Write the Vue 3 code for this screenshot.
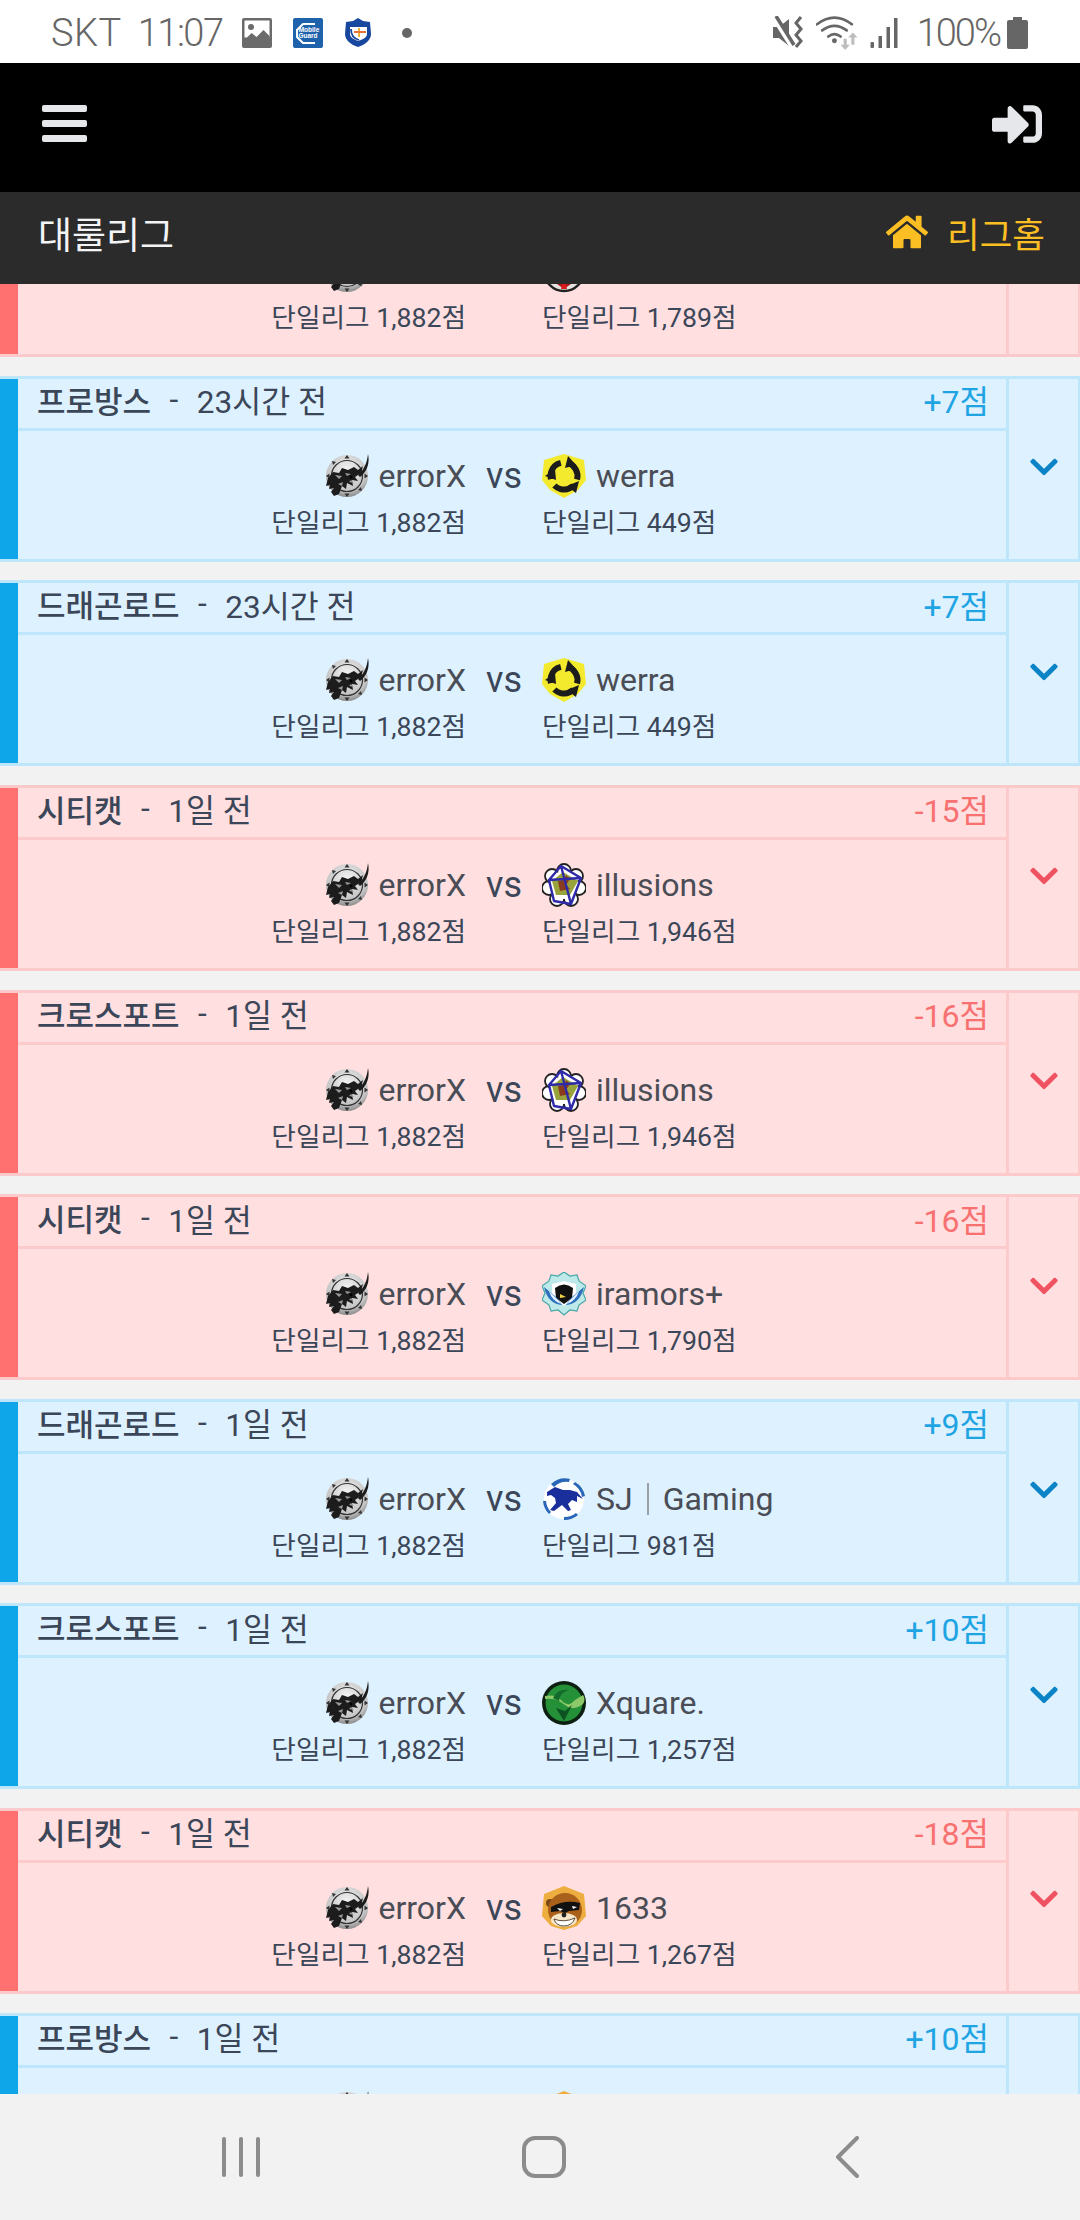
<script setup>
const B = 'blue'
const R = 'red'
const matches = [
  { tone: R, map: '', time: '', score: '', logo: 'hawk', opp: '', oppPts: '1,789' },
  { tone: B, map: '프로방스', time: '23시간 전', score: '+7점', logo: 'werra', opp: 'werra', oppPts: '449' },
  { tone: B, map: '드래곤로드', time: '23시간 전', score: '+7점', logo: 'werra', opp: 'werra', oppPts: '449' },
  { tone: R, map: '시티캣', time: '1일 전', score: '-15점', logo: 'illusions', opp: 'illusions', oppPts: '1,946' },
  { tone: R, map: '크로스포트', time: '1일 전', score: '-16점', logo: 'illusions', opp: 'illusions', oppPts: '1,946' },
  { tone: R, map: '시티캣', time: '1일 전', score: '-16점', logo: 'iramors', opp: 'iramors+', oppPts: '1,790' },
  { tone: B, map: '드래곤로드', time: '1일 전', score: '+9점', logo: 'sj', opp: 'SJ', oppExtra: 'Gaming', oppPts: '981' },
  { tone: B, map: '크로스포트', time: '1일 전', score: '+10점', logo: 'xquare', opp: 'Xquare.', oppPts: '1,257' },
  { tone: R, map: '시티캣', time: '1일 전', score: '-18점', logo: 'bear', opp: '1633', oppPts: '1,267' },
  { tone: B, map: '프로방스', time: '1일 전', score: '+10점', logo: 'bear', opp: '1633', oppPts: '1,267' }
]
</script>

<template>
  <div class="phone">
    <svg class="defs" width="0" height="0" aria-hidden="true">
      <defs>
        <radialGradient id="steel" cx="50%" cy="35%" r="70%">
          <stop offset="0" stop-color="#f4f4f4" />
          <stop offset="0.7" stop-color="#c4c4c4" />
          <stop offset="1" stop-color="#7a7a7a" />
        </radialGradient>
        <symbol id="logo-errorx" viewBox="0 0 44 44">
          <circle cx="22" cy="22" r="21" fill="url(#steel)" />
          <circle cx="22" cy="22" r="15.500" fill="none" stroke="#333" stroke-width="1.200" />
          <path d="M3 24l5-6 6 1 3-5 6 2 6-3 4 3 5-4-2 7-6 4 3 4-6-1 1 6-6-3-1 6-4-3-3 8-5 2-3-4 3-4-5 1 1-4-4 1z" fill="#1c1c1c" />
          <path d="M43 0c2 9-1 18-8 23l-2-2c6-5 9-12 10-21z" fill="#1c1c1c" />
          <path d="M10 21l7 1-3 3zM20 19l6 1-4 2zM13 30l5-2-1 4zM26 26l3 3-5-1z" fill="#9a9a9a" />
          <circle cx="26" cy="23" r="1.400" fill="#000" />
          <path d="M22 1l2.500 3.500h-5zM22 43l2.500-3.500h-5zM1 22l3.500-2.500v5zM43 22l-3.500-2.500v5zM7 7l4 1-3 3zM37 37l-4-1 3-3z" fill="#333" />
        </symbol>
        <symbol id="logo-werra" viewBox="0 0 44 44">
          <path d="M22 0l20 6 2 20-8 10-14 8-14-8-8-10 2-20z" fill="#f3ea2e" />
          <circle cx="22" cy="22" r="13.500" fill="none" stroke="#1c1c1c" stroke-width="6" stroke-dasharray="21 7.270" transform="rotate(-75 22 22)" />
          <path d="M26 2l8 9-11 3zM37 27l-3 12-9-7zM3 22l10-7 1 11z" fill="#1c1c1c" />
        </symbol>
        <symbol id="logo-illusions" viewBox="0 0 44 44">
          <g fill="#fff" stroke="#222" stroke-width="1.800">
            <circle cx="22" cy="8" r="7" /><circle cx="34" cy="13" r="7" /><circle cx="37" cy="25" r="7" />
            <circle cx="29" cy="36" r="7" /><circle cx="15" cy="36" r="7" /><circle cx="7" cy="25" r="7" /><circle cx="10" cy="13" r="7" />
          </g>
          <circle cx="22" cy="22" r="14" fill="#fff" />
          <path d="M21 9l15 9-8 14-14 0-4-14z" fill="#98a33c" />
          <path d="M16 18l12-2-4 6 4 4-10 2zM24 12l5 5-7 1z" fill="#8a3b1e" />
          <path d="M19 3l20 12-10 26-17-3-5-21zM19 3l10 38M7 17l32-2" fill="none" stroke="#2f2ba8" stroke-width="2.400" stroke-linejoin="round" />
        </symbol>
        <symbol id="logo-iramors" viewBox="0 0 44 44">
          <path d="M22 0l6 4 7-1 2 6 7 5-3 7 3 7-7 5-2 6-7-1-6 5-6-5-7 1-2-6-7-5 3-7-3-7 7-5 2-6 7 1z" fill="#bde9e8" stroke="#46a7a8" stroke-width="1.200" />
          <path d="M10 12l12-3 12 3v10l-12 12-12-12z" fill="#fff" />
          <path d="M13 16q9-7 18 0l-1 10-8 6-8-6z" fill="#111" />
          <path d="M18 22l6 3-6 1z" fill="#f0d246" />
          <path d="M2 15l12 10 6 8q-14-1-18-18zM42 15L30 25l-6 8q14-1 18-18z" fill="#2f6fc0" />
          <path d="M7 19l9 9 3 4q-9-3-12-13zM37 19l-9 9-3 4q9-3 12-13z" fill="#dff2fb" />
        </symbol>
        <symbol id="logo-sj" viewBox="0 0 44 44">
          <circle cx="22" cy="22" r="20" fill="#fff" />
          <path d="M9 7A21 21 0 0 1 28 2l-1 3A18 18 0 0 0 12 10zM33 5a21 21 0 0 1 10 14l-3 1a18 18 0 0 0-9-13zM1 24a21 21 0 0 0 6 13l2-2a18 18 0 0 1-5-11zM22 43a21 21 0 0 0 14-5l-2-2a18 18 0 0 1-12 4z" fill="#2a66b8" />
          <path d="M5 15l8-5 8 3 7 0 7 2 6 7-6-3 0 6-5-2-4 4 3 6-3 1-6-6-8 6-4-1 6-7-1-5-4-3-4 1z" fill="#1a2f9c" />
        </symbol>
        <symbol id="logo-xquare" viewBox="0 0 44 44">
          <circle cx="22" cy="22" r="22" fill="#0c1f10" />
          <circle cx="22" cy="22" r="18.500" fill="#249138" />
          <path d="M3 15q11-2 17 5t13-1l8-5q3 4 0 9-7 6-15 3l-9-6q-5-3-14-2z" fill="#8dc968" />
          <path d="M14 27l8 13 8-16-7 6z" fill="#0d5322" />
          <path d="M27 9q-9 2-10 11l-6-3q5-10 16-8z" fill="#126a2b" />
        </symbol>
        <symbol id="logo-bear" viewBox="0 0 44 44">
          <path d="M22 0l20 8 2 22-9 10-13 4-13-4-9-10 2-22z" fill="#eeae3f" />
          <circle cx="8" cy="17" r="4" fill="#7d4715" />
          <ellipse cx="23" cy="24" rx="17" ry="17" fill="#a9601a" />
          <path d="M9 21q14-8 29-4l-1 7-10 1-4 2-5-2-9 1z" fill="#111" />
          <path d="M15 22l6 1-3 2zM30 20l5 1-4 2z" fill="#fff" />
          <ellipse cx="22" cy="34" rx="13" ry="7" fill="#f5e6c8" />
          <path d="M12 33q10 4 21-1-3 8-11 8t-10-7z" fill="#fff" stroke="#3a2410" stroke-width=".8" />
          <circle cx="22" cy="29" r="2.400" fill="#222" />
        </symbol>
        <symbol id="logo-hawk" viewBox="0 0 44 44">
          <circle cx="22" cy="22" r="20" fill="#e8e3e3" stroke="#222" stroke-width="2.400" />
          <path d="M8 30q14 8 28 0l-14 10z" fill="#b01818" />
          <path d="M22 28l-3 12h6z" fill="#d81c1c" />
        </symbol>
      </defs>
    </svg>

    <header class="status">
      <div class="status-left">
        <span class="carrier">SKT</span>
        <span class="clock">11:07</span>
        <svg class="ic-image" viewBox="0 0 30 30">
          <rect width="30" height="30" rx="2" fill="#6b6b6b" />
          <rect x="2.500" y="2.500" width="25" height="17" fill="#fff" />
          <circle cx="9" cy="9" r="3" fill="#6b6b6b" />
          <path d="M2.500 22l7-7 5 4 7-7 6 6v9h-25z" fill="#6b6b6b" />
        </svg>
        <svg class="ic-guard" viewBox="0 0 30 30">
          <rect width="30" height="30" rx="2" fill="#1f62ac" />
          <path d="M22 6h-12l-6 6v7l6 6h12" fill="none" stroke="#fff" stroke-width="2" />
          <text x="16" y="13.500" class="guard-text" text-anchor="middle">Mobile</text>
          <text x="15" y="19.500" class="guard-text" text-anchor="middle">Guard</text>
        </svg>
        <svg class="ic-shield" viewBox="0 0 26 29">
          <path d="M13 0l5 3 7 1 1 12c0 6-6 11-13 13C6 27 0 22 0 16L1 4l7-1z" fill="#17479e" />
          <path d="M5 9h17v7c0 3-3 5-9 7-5-2-8-4-8-7z" fill="#fff" />
          <path d="M13 10h2v9h-2z" fill="#f4b32c" />
          <path d="M9 13h12v2H9z" fill="#e6743a" />
          <path d="M6 11q0 9 8 11" fill="none" stroke="#17479e" stroke-width="1.800" />
        </svg>
        <i class="dot"></i>
      </div>
      <div class="status-right">
        <svg class="ic-mute" viewBox="0 0 31 33">
          <path d="M0 11h6l10-8v27l-10-8H0z" fill="#666" />
          <path d="M0 1l18 29" stroke="#fff" stroke-width="4" />
          <path d="M3 0l18 29" stroke="#666" stroke-width="3.500" />
          <path d="M28 1l-5 6 5 6-5 6 5 6-5 6" fill="none" stroke="#666" stroke-width="3" />
        </svg>
        <svg class="ic-wifi" viewBox="0 0 41 35">
          <g fill="none" stroke="#666" stroke-width="2.600" stroke-linecap="round">
            <path d="M1 9q17-13 34 0" />
            <path d="M6 15q12-9 24 0" />
            <path d="M12 21q6-5 12 0" />
          </g>
          <circle cx="18" cy="25" r="2.400" fill="#666" />
          <path d="M27 23h3v6h3l-4.500 5-4.500-5h3zM36 17l4.500 5h-3v7h-3v-7h-3z" fill="#bdbdbd" />
        </svg>
        <svg class="ic-signal" viewBox="0 0 27 30">
          <rect x="0" y="24" width="3.500" height="6" rx="1" fill="#666" />
          <rect x="8" y="18" width="3.500" height="12" fill="#666" />
          <rect x="16" y="9" width="3.500" height="21" fill="#666" />
          <rect x="23.500" y="0" width="3.500" height="30" fill="#666" />
        </svg>
        <span class="percent">100%</span>
        <svg class="ic-battery" viewBox="0 0 21 32">
          <path d="M6 0h9v3h4a2 2 0 0 1 2 2v25a2 2 0 0 1-2 2H2a2 2 0 0 1-2-2V5a2 2 0 0 1 2-2h4z" fill="#666" />
        </svg>
      </div>
    </header>

    <nav class="topbar">
      <div class="burger"><i></i><i></i><i></i></div>
      <svg class="ic-login" viewBox="0 0 512 512">
        <path fill="#e5e7eb" d="M416 448h-84c-6.600 0-12-5.400-12-12v-40c0-6.600 5.400-12 12-12h84c17.700 0 32-14.300 32-32V160c0-17.700-14.300-32-32-32h-84c-6.600 0-12-5.400-12-12V76c0-6.600 5.400-12 12-12h84c53 0 96 43 96 96v192c0 53-43 96-96 96zm-47-201L201 79c-15-15-41-4.500-41 17v96H24c-13.300 0-24 10.700-24 24v96c0 13.300 10.700 24 24 24h136v96c0 21.500 26 32 41 17l168-168c9.300-9.400 9.300-24.600 0-34z" />
      </svg>
    </nav>

    <div class="subbar">
      <span class="league">대룰리그</span>
      <span class="home">
        <svg class="ic-home" viewBox="0 0 576 512">
          <path fill="#fbbf24" d="M280.370 148.260L96 300.110V464a16 16 0 0 0 16 16l112.060-.29a16 16 0 0 0 15.920-16V368a16 16 0 0 1 16-16h64a16 16 0 0 1 16 16v95.640a16 16 0 0 0 16 16.050L464 480a16 16 0 0 0 16-16V300L295.670 148.260a12.190 12.190 0 0 0-15.300 0zM571.600 251.470L488 182.560V44.050a12 12 0 0 0-12-12h-56a12 12 0 0 0-12 12v72.610L318.470 43a48 48 0 0 0-61 0L4.340 251.470a12 12 0 0 0-1.600 16.900l25.500 31A12 12 0 0 0 45.150 301l235.220-193.740a12.190 12.190 0 0 1 15.300 0L530.900 301a12 12 0 0 0 16.900-1.600l25.500-31a12 12 0 0 0-1.700-16.930z" />
        </svg>
        리그홈
      </span>
    </div>

    <main class="viewport">
      <div class="list">
        <article v-for="(m, i) in matches" :key="i" class="card" :class="m.tone">
          <div class="bar"></div>
          <div class="main">
            <div class="head">
              <span class="map">{{ m.map }}</span>
              <span v-if="m.map" class="sep">-</span>
              <span class="time">{{ m.time }}</span>
              <span class="score">{{ m.score }}</span>
            </div>
            <div class="body">
              <div class="me">
                <svg class="logo"><use href="#logo-errorx" /></svg>
                <span class="name">errorX</span>
              </div>
              <span class="vs">vs</span>
              <div class="opp">
                <svg class="logo"><use :href="'#logo-' + m.logo" /></svg>
                <span class="name">{{ m.opp }}</span>
                <template v-if="m.oppExtra">
                  <i class="pipe"></i>
                  <span class="name">{{ m.oppExtra }}</span>
                </template>
              </div>
              <div class="pts me-pts">단일리그 1,882점</div>
              <div class="pts opp-pts">단일리그 {{ m.oppPts }}점</div>
            </div>
          </div>
          <div class="toggle">
            <svg v-if="i < 9" class="chev" viewBox="0 0 448 512">
              <path fill="currentColor" d="M207.029 381.476L12.686 187.132c-9.373-9.373-9.373-24.569 0-33.941l22.667-22.667c9.357-9.357 24.522-9.375 33.901-.04L224 284.505l154.745-154.021c9.379-9.335 24.544-9.317 33.901.04l22.667 22.667c9.373 9.373 9.373 24.569 0 33.941L240.971 381.476c-9.373 9.372-24.569 9.372-33.942 0z" />
            </svg>
          </div>
        </article>
      </div>
    </main>

    <footer class="navbar">
      <div class="recents"><i></i><i></i><i></i></div>
      <div class="homebtn"></div>
      <svg class="back" viewBox="0 0 25 42">
        <path d="M22 2L3 21l19 19" fill="none" stroke="#8c8c8c" stroke-width="4" stroke-linecap="round" stroke-linejoin="round" />
      </svg>
    </footer>
  </div>
</template>

<style>
html, body { margin: 0; background: #f2f2f2; }
</style>

<style scoped>
.phone {
  width: 1080px;
  height: 2220px;
  display: flex;
  flex-direction: column;
  overflow: hidden;
  background: #f2f2f2;
  font-family: Roboto, "Noto Sans CJK KR", sans-serif;
}
.defs { position: absolute; }
svg { display: block; flex: none; }

.status {
  height: 63px;
  flex: none;
  box-sizing: border-box;
  background: #fff;
  display: flex;
  justify-content: space-between;
  align-items: center;
  padding: 2px 52px 0 51px;
  color: #666;
  font-size: 38px;
  font-weight: 300;
}
.status-left, .status-right { display: flex; align-items: center; }
.carrier { margin-right: 16px; letter-spacing: .5px; }
.clock { margin-right: 19px; letter-spacing: -1.500px; }
.ic-image { width: 30px; height: 30px; margin-right: 21px; }
.ic-guard { width: 30px; height: 30px; margin-right: 22px; }
.guard-text { font-size: 6.500px; font-weight: 700; fill: #fff; font-family: "Liberation Sans", sans-serif; }
.ic-shield { width: 26px; height: 29px; margin-right: 31px; }
.dot { width: 10px; height: 10px; border-radius: 50%; background: #666; }
.ic-mute { width: 33px; height: 33px; margin-right: 11px; }
.ic-wifi { width: 42px; height: 36px; margin-right: 12px; }
.ic-signal { width: 28px; height: 30px; margin-right: 19px; }
.percent { margin-right: 7px; letter-spacing: -2px; }
.ic-battery { width: 21px; height: 32px; }

.topbar {
  height: 129px;
  flex: none;
  box-sizing: border-box;
  background: #000;
  display: flex;
  justify-content: space-between;
  align-items: center;
  padding: 0 38px 8px 42px;
}
.burger { display: flex; flex-direction: column; gap: 8px; }
.burger i { display: block; width: 45px; height: 7px; border-radius: 2px; background: #e5e7eb; }
.ic-login { width: 50px; height: 50px; }

.subbar {
  height: 92px;
  flex: none;
  box-sizing: border-box;
  background: #2b2b2b;
  display: flex;
  justify-content: space-between;
  align-items: center;
  padding: 0 35px 11px 38px;
}
.league { color: #f3f4f6; font-size: 37px; font-weight: 400; }
.home { display: flex; align-items: center; gap: 19px; color: #fbbf24; font-size: 35.500px; font-weight: 400; }
.ic-home { width: 42px; height: 38px; margin-top: -1px; }

.viewport { flex: 1; min-height: 0; overflow: hidden; }
.list { margin-top: -112.800px; display: flex; flex-direction: column; gap: 18.600px; }

.card {
  height: 186px;
  flex: none;
  box-sizing: border-box;
  display: grid;
  grid-template-columns: 18px 1fr 72px;
  border-style: solid;
  border-width: 3px 2px 3px 0;
  color: #3b4658;
}
.card.blue { background: #def1ff; border-color: #bde6fb; }
.card.red { background: #ffdfdf; border-color: #fccaca; }
.blue .bar { background: #0ea5e9; }
.red .bar { background: #ff7070; }

.main { display: flex; flex-direction: column; min-width: 0; }
.head {
  height: 52px;
  flex: none;
  box-sizing: border-box;
  display: flex;
  align-items: center;
  padding: 0 17px 8px 19px;
  border-bottom: 3px solid;
  font-size: 31.500px;
}
.blue .head { border-color: #bde6fb; }
.red .head { border-color: #fccaca; }
.map { font-weight: 500; font-size: 31px; }
.sep { margin: 0 18.500px; }
.score { margin-left: auto; font-size: 32px; }
.blue .score { color: #1fa4e3; }
.red .score { color: #f87171; }

.body {
  flex: 1;
  display: grid;
  grid-template-columns: 448px 76px 1fr;
  grid-template-rows: 44px 30px;
  row-gap: 10px;
  padding-top: 23px;
  align-items: center;
}
.me, .opp { display: flex; align-items: center; gap: 10px; color: #4a4d55; font-size: 32px; }
.me { justify-content: flex-end; }
.logo { width: 44px; height: 44px; }
.vs { text-align: center; font-size: 36px; color: #3b4658; line-height: 44px; }
.pts { font-size: 26.700px; line-height: 30px; white-space: nowrap; color: #3b4658; }
.me-pts { grid-column: 1; text-align: right; }
.opp-pts { grid-column: 3; }
.pipe { width: 2px; height: 32px; background: #9aa0a6; margin: 0 4px; }

.toggle {
  border-left: 3px solid;
  display: flex;
  justify-content: center;
  align-items: center;
  padding: 0 0 3px 0;
}
.blue .toggle { border-color: #bde6fb; color: #0a84c6; }
.red .toggle { border-color: #fccaca; color: #ef5361; }
.chev { width: 28px; height: 32px; }

.navbar {
  height: 126px;
  flex: none;
  background: #f2f2f2;
  display: grid;
  grid-template-columns: 482px 113px 1fr;
  align-items: center;
}
.recents { display: flex; gap: 13px; padding-left: 222px; }
.recents i { display: block; width: 4px; height: 40px; border-radius: 2px; background: #8c8c8c; }
.homebtn { width: 44px; height: 42px; box-sizing: border-box; margin-left: 40px; border: 4.500px solid #8c8c8c; border-radius: 13px; }
.back { width: 25px; height: 42px; margin-left: 240px; }
</style>
